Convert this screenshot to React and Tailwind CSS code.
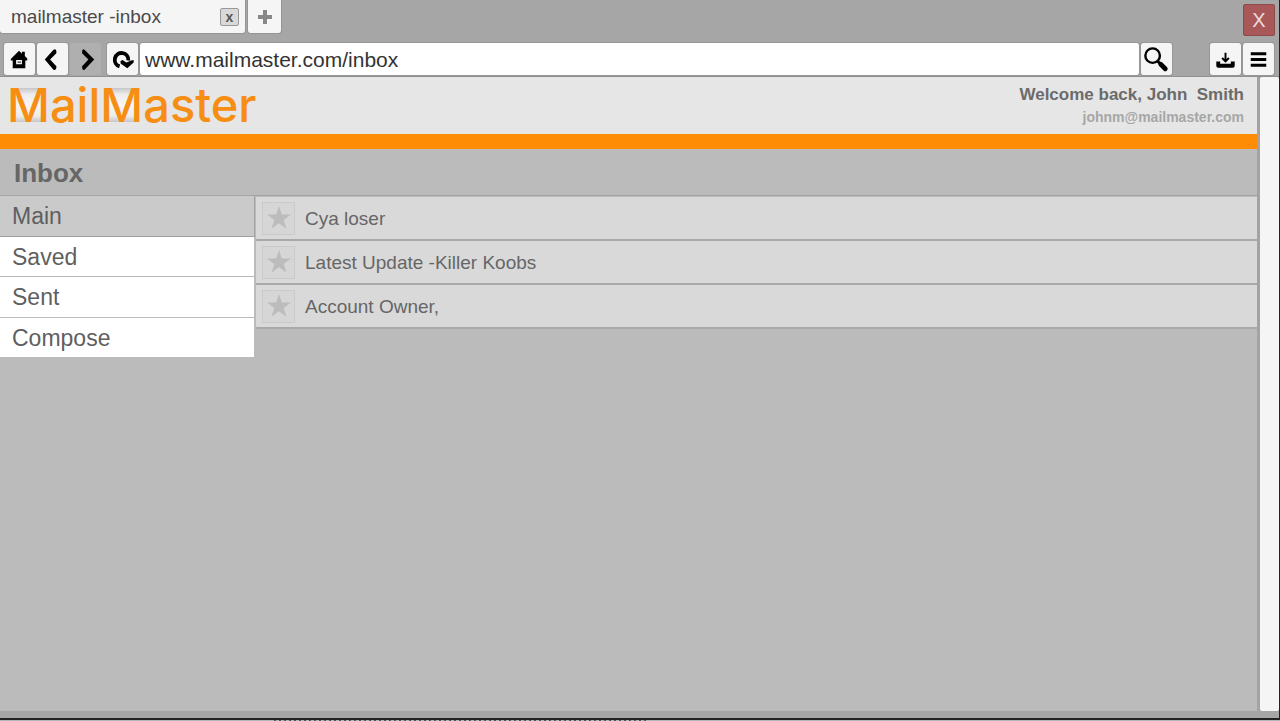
import { useState } from "react";
import clsx from "clsx";

const folders = ["Main", "Saved", "Sent", "Compose"];

const mails = [
  { id: 1, subject: "Cya loser" },
  { id: 2, subject: "Latest Update -Killer Koobs" },
  { id: 3, subject: "Account Owner," },
];

const HomeIcon = () => (
  <svg viewBox="0 0 32 32" className="w-full" aria-hidden="true">
    <path
      fillRule="evenodd"
      d="M15.500 7 L18.500 10 V8 H21.500 V12.500 L24 15 V17 H22 V25 H9 V17 H7 V15.500 Z M12.500 16.500 V21 H18.500 V16.500 Z"
    />
    <path d="M14 18 h3.500 v1.500 h-3.500 z" fill="#555" />
  </svg>
);

const BackIcon = () => (
  <svg viewBox="0 0 32 32" className="w-full" aria-hidden="true">
    <path d="M17 6 L8 16 L17 26.500 Q20 28 20 24 V23 L13.500 16 L20 9.500 V8 Q20 4 17 6 Z" />
  </svg>
);

const ForwardIcon = () => (
  <svg viewBox="0 0 32 32" className="w-full" aria-hidden="true">
    <path d="M15 6 L25 16 L15 26.500 Q12.500 28 12.500 24 V23 L19 16 L12.500 9.500 V8 Q12.500 4 15 6 Z" />
  </svg>
);

const ReloadIcon = () => (
  <svg viewBox="0 0 32 32" className="w-full" aria-hidden="true">
    <path
      d="M13 23 A7 7 0 1 1 22 17"
      fill="none"
      stroke="black"
      strokeWidth="4"
    />
    <path d="M14 17.500 L16 16.500 L20 19 L25 17 L27.500 16.500 V19 L21 25 L14 20 Z" />
  </svg>
);

const SearchIcon = () => (
  <svg viewBox="0 0 32 32" className="w-full" fill="none" stroke="black" aria-hidden="true">
    <circle cx="12" cy="12" r="7.500" strokeWidth="2.500" />
    <path d="M17 17.500 L20 20.500" strokeWidth="3" />
    <path d="M20.500 21 L25 25.500" strokeWidth="5" strokeLinecap="round" />
  </svg>
);

const DownloadIcon = () => (
  <svg viewBox="0 0 32 32" className="w-full" fill="none" stroke="black" aria-hidden="true">
    <path d="M16 9 V18 M12.500 14.500 L16 18 L19.500 14.500" strokeWidth="2" />
    <path d="M8.500 18 V22.500 H23.500 V18" strokeWidth="4" strokeLinejoin="round" />
  </svg>
);

const MenuIcon = () => (
  <svg viewBox="0 0 32 32" className="w-full" stroke="black" strokeWidth="3" aria-hidden="true">
    <path d="M8 10 H24 M8 16 H24 M8 22 H24" />
  </svg>
);

const ToolButton = ({ label, disabled, className, children }) => (
  <button
    type="button"
    aria-label={label}
    disabled={disabled}
    className={clsx(
      "h-8 w-[31px] shrink-0 rounded-xs",
      disabled ? "bg-[#afafaf]" : "bg-[#f5f5f5] outline outline-[#979797]",
      className
    )}
  >
    {children}
  </button>
);

const LogoM = () => (
  <span className="bg-[linear-gradient(#c6c6c6,#ededed_18%,#f6f6f6_50%,#ededed_82%,#c6c6c6)] bg-size-[70%_34px] bg-position-[50%_54%] bg-no-repeat">
    M
  </span>
);

const BrowserBar = () => {
  const [url, setUrl] = useState("www.mailmaster.com/inbox");

  return (
    <header className="border-b border-[#8f8f8f]">
      <div className="flex h-[43px] items-start justify-between pr-1">
        <div className="flex gap-[3px]">
          <div className="flex h-[33px] w-[245px] items-center justify-between rounded-b-xs bg-[#f5f5f5] pr-[6px] pl-[11px] text-[19px] text-[#4a4a4a] outline outline-[#959595]">
            <span className="pt-px">mailmaster -inbox</span>
            <button
              type="button"
              aria-label="Close tab"
              className="flex h-[18px] w-[19px] items-center justify-center rounded-xs border border-[#999] bg-[#d9d9d9] text-sm leading-4 font-bold text-[#555]"
            >
              x
            </button>
          </div>
          <button
            type="button"
            aria-label="New tab"
            className="flex h-[33px] w-[33px] items-center justify-center rounded-b-xs bg-[#f5f5f5] outline outline-[#959595]"
          >
            <svg viewBox="0 0 14 14" className="size-[14px]" aria-hidden="true">
              <path d="M7 0 V14 M0 7 H14" stroke="#888" strokeWidth="4" />
            </svg>
          </button>
        </div>
        <button
          type="button"
          aria-label="Close window"
          className="mt-1 flex size-8 items-center justify-center rounded-xs border border-[#8f4b4b] bg-[#a85858] text-xl text-[#ecdcdc]"
        >
          X
        </button>
      </div>

      <div className="flex h-[33px] items-start gap-[2px] pr-[5px] pl-1">
        <ToolButton label="Home">
          <HomeIcon />
        </ToolButton>
        <ToolButton label="Back">
          <BackIcon />
        </ToolButton>
        <ToolButton label="Forward" disabled>
          <ForwardIcon />
        </ToolButton>
        <ToolButton label="Reload" className="ml-1">
          <ReloadIcon />
        </ToolButton>
        <input
          type="text"
          aria-label="Address"
          value={url}
          onChange={(e) => setUrl(e.target.value)}
          className="h-8 min-w-0 flex-1 rounded-xs bg-white px-[5px] pt-px text-[21px] text-[#333] outline outline-[#979797]"
        />
        <ToolButton label="Search">
          <SearchIcon />
        </ToolButton>
        <ToolButton label="Downloads" className="ml-9">
          <DownloadIcon />
        </ToolButton>
        <ToolButton label="Menu">
          <MenuIcon />
        </ToolButton>
      </div>
    </header>
  );
};

const MailRow = ({ mail }) => (
  <li className="flex h-[44px] items-center gap-[10px] border-b-2 border-[#a9a9a9] bg-[#d9d9d9] pl-[6px]">
    <button
      type="button"
      aria-label={`Star ${mail.subject}`}
      className="flex size-[33px] items-center justify-center border border-[#cacaca] bg-[#d6d6d6]"
    >
      <svg viewBox="0 0 24 24" className="size-6" aria-hidden="true">
        <path
          fill="#bcbcbc"
          d="M12 0 L14.800 8.500 H24 L16.700 13.900 L19.400 22.500 L12 17.300 L4.600 22.500 L7.300 13.900 L0 8.500 H9.200 Z"
        />
      </svg>
    </button>
    <a href="#mail" className="pt-[2px] text-[19px] text-[#666]">
      {mail.subject}
    </a>
  </li>
);

export default function App() {
  const [folder, setFolder] = useState("Main");

  return (
    <div className="flex h-screen flex-col overflow-hidden bg-[#a6a6a6] font-['Liberation_Sans',Arial,sans-serif]">
      <div className="flex min-h-0 flex-1 flex-col border-r border-b-2 border-[#222]">
        <BrowserBar />

        <div className="mb-[7px] flex min-h-0 flex-1">
          <main className="flex min-w-0 flex-1 flex-col bg-[#bbb]">
            <div className="flex h-[57px] items-start justify-between bg-[#e6e6e6] pr-[13px] pl-[7px]">
              <h1 className="font-['Inter',sans-serif] text-[47px] leading-[55px] font-medium text-[#f68e14]">
                <LogoM />
                ail
                <LogoM />
                aster
              </h1>
              <div className="pt-[7px] text-right font-bold">
                <p className="text-[17px] leading-[22px] whitespace-pre text-[#6b6b6b]">
                  Welcome back, John{"  "}Smith
                </p>
                <p className="text-[14px] leading-[22px] text-[#a6a6a6]">
                  johnm@mailmaster.com
                </p>
              </div>
            </div>
            <div className="h-[15px] bg-[#ff8c05]" />

            <h2 className="h-[47px] border-b border-[#a3a3a3] pl-[14px] text-[26px] leading-[48px] font-bold text-[#666]">
              Inbox
            </h2>

            <div className="flex items-start gap-px">
              <nav className="grid h-[162px] w-[255px] grid-rows-4">
                {folders.map((name) => (
                  <button
                    key={name}
                    type="button"
                    onClick={() => setFolder(name)}
                    className={clsx(
                      "border-r border-b pt-px pl-3 text-left text-[23px] leading-8 text-[#5f5f5f]",
                      name === folder
                        ? "border-[#a0a0a0] bg-[#cacaca]"
                        : "border-[#bbb] bg-white"
                    )}
                  >
                    {name}
                  </button>
                ))}
              </nav>
              <ul className="min-w-0 flex-1 pt-px">
                {mails.map((mail) => (
                  <MailRow key={mail.id} mail={mail} />
                ))}
              </ul>
            </div>
          </main>
          <div className="w-[22px] border-l-3 border-[#a3a3a3] bg-[#a6a6a6]">
            <div className="h-full rounded-xs bg-[#f5f5f5]" />
          </div>
        </div>
      </div>
      <div className="h-px bg-[#b5b5b5] pl-[274px]">
        <div className="h-px w-[373px] bg-[repeating-linear-gradient(90deg,#555_0_2px,#b5b5b5_2px_5px)]" />
      </div>
    </div>
  );
}
